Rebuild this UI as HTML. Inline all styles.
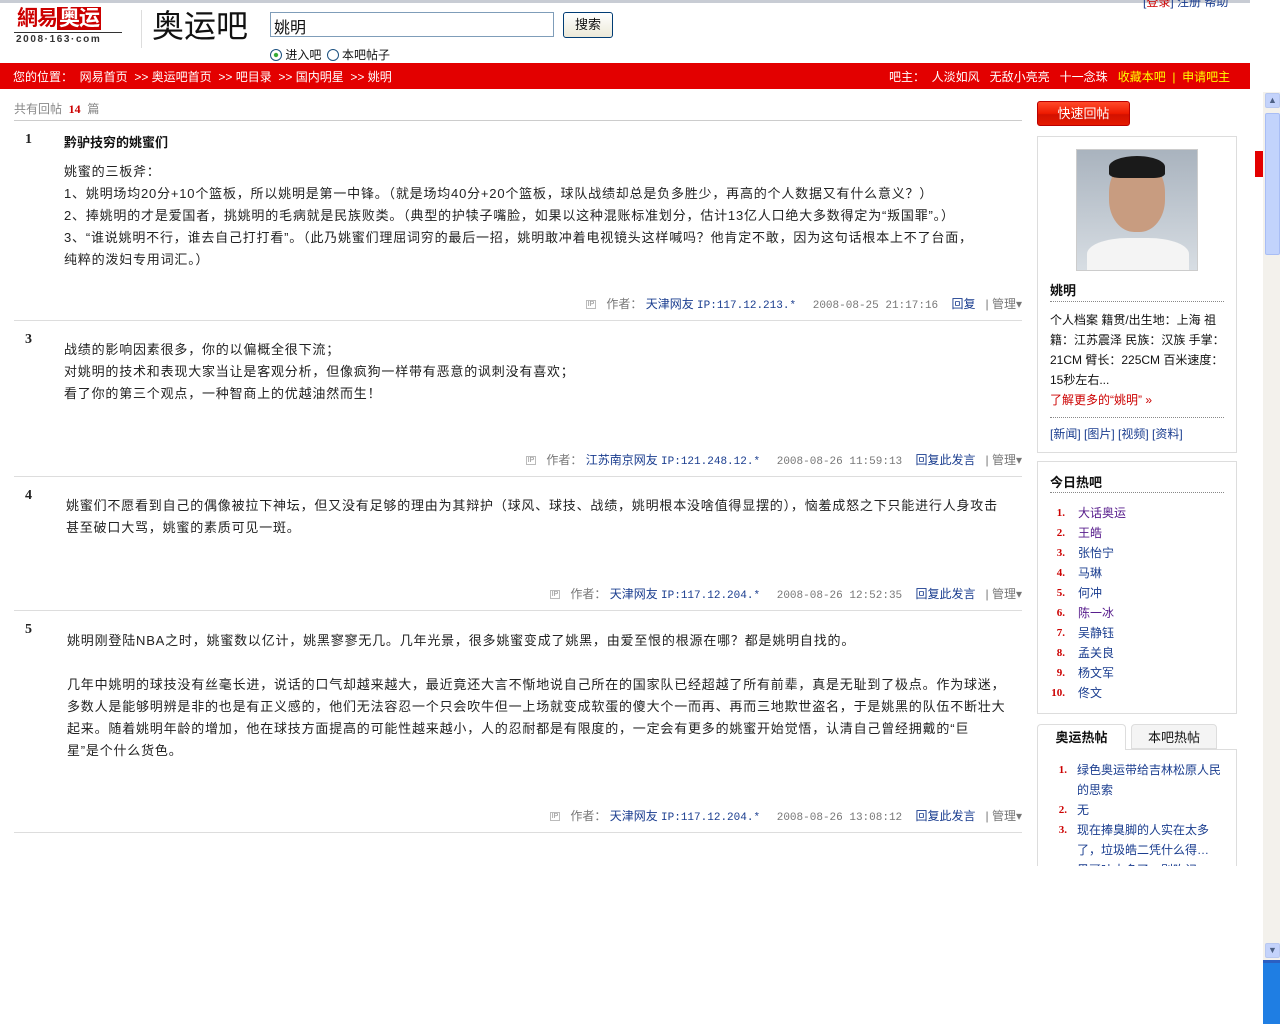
<!DOCTYPE html>
<html><head><meta charset="utf-8"><style>
*{margin:0;padding:0;box-sizing:border-box}
body{width:1280px;height:1024px;position:relative;overflow:hidden;background:#fff;font-family:"Liberation Sans","Noto Sans CJK SC","WenQuanYi Zen Hei",sans-serif;font-size:12px;color:#333}
.a{position:absolute;white-space:nowrap}
a{text-decoration:none}
.nav{color:#fff}
.post{position:absolute;left:14px;width:1008px;border-bottom:1px solid #ddd}
.num{position:absolute;left:11px;font-size:14px;font-weight:bold;color:#222;font-family:"Liberation Serif",serif}
.body{position:absolute;left:50px;font-size:13px;line-height:22px;color:#222;white-space:nowrap;letter-spacing:0.8px}
.foot{position:absolute;right:0;font-size:12px;color:#777;white-space:nowrap}
.foot .u{color:#1a3d8f}
.foot .m{font-family:"Liberation Mono",monospace;font-size:11px}
.foot .ip{display:inline-block;border:1px solid #bbb;font-size:7px;line-height:7px;padding:0 1px;color:#888;vertical-align:middle;margin-right:10px}
.box{position:absolute;left:1037px;width:200px;border:1px solid #ddd;background:#fff}
.hot{font-size:12px;line-height:20px}
.hot div{position:relative;padding-left:40px;color:#1a3d8f}
.hot b{position:absolute;left:0;width:27px;text-align:right;color:#c00;font-size:11px;font-family:"Liberation Serif",serif}
</style></head><body>
<div class="a" style="left:0;top:0;width:1250px;height:3px;background:#c8ccd4"></div>
<div class="a" style="left:1143px;top:-7px;font-size:12px;color:#1a3d8f">[<span style="color:#c00">登录</span>] 注册 帮助</div>
<!-- logo -->
<div class="a" style="left:17px;top:6px;font-size:21px;line-height:26px;color:#c00;font-weight:bold;letter-spacing:-1px">網易<span style="background:#c00;color:#fff;padding:0 2px">奥运</span></div>
<div class="a" style="left:14px;top:32px;width:108px;height:1px;background:#333"></div>
<div class="a" style="left:16px;top:34px;font-size:10px;line-height:12px;font-weight:bold;color:#333;letter-spacing:1.6px">2008·163·com</div>
<div class="a" style="left:141px;top:10px;width:1px;height:38px;background:#ddd"></div>
<div class="a" style="left:152px;top:6px;font-size:32px;line-height:40px;color:#111">奥运吧</div>
<div class="a" style="left:270px;top:12px;width:284px;height:25px;border:1px solid #7f9db9;font-size:16px;padding:1px 3px;color:#111">姚明</div>
<div class="a" style="left:563px;top:12px;width:50px;height:26px;border:1px solid #003c74;border-radius:3px;background:linear-gradient(#fff,#ece9d8);font-size:13px;text-align:center;line-height:24px;color:#111">搜索</div>
<div class="a" style="left:270px;top:46px;font-size:12px;color:#111"><span style="display:inline-block;width:12px;height:12px;border:1px solid #1c5180;border-radius:50%;vertical-align:-2px;background:radial-gradient(#3a3 25%,#fff 35%)"></span> 进入吧 <span style="display:inline-block;width:12px;height:12px;border:1px solid #1c5180;border-radius:50%;vertical-align:-2px;margin-left:2px"></span> 本吧帖子</div>
<!-- nav -->
<div class="a" style="left:0;top:63px;width:1250px;height:26px;background:#e30000"></div>
<div class="a nav" style="left:13px;top:68px">您的位置： &nbsp;网易首页 &nbsp;&gt;&gt; 奥运吧首页 &nbsp;&gt;&gt; 吧目录 &nbsp;&gt;&gt; 国内明星 &nbsp;&gt;&gt; 姚明</div>
<div class="a nav" style="left:889px;top:68px">吧主： &nbsp;人淡如风 &nbsp;&nbsp;无敌小亮亮 &nbsp;&nbsp;十一念珠 &nbsp;&nbsp;<span style="color:#ff0">收藏本吧 &nbsp;| &nbsp;申请吧主</span></div>
<div class="a" style="left:14px;top:100px;color:#888">共有回帖 &nbsp;<b style="color:#c00;font-family:'Liberation Serif',serif">14</b> &nbsp;篇</div>
<div class="a" style="left:14px;top:120px;width:1008px;height:1px;background:#ccc"></div>

<div class="post" style="top:121px;height:200px">
<div class="num" style="top:11px">1</div>
<div class="a" style="left:50px;top:11px;font-size:13px;font-weight:bold;color:#111">黔驴技穷的姚蜜们</div>
<div class="body" style="top:40px">姚蜜的三板斧：<br>1、姚明场均20分+10个篮板，所以姚明是第一中锋。（就是场均40分+20个篮板，球队战绩却总是负多胜少，再高的个人数据又有什么意义？）<br>2、捧姚明的才是爱国者，挑姚明的毛病就是民族败类。（典型的护犊子嘴脸，如果以这种混账标准划分，估计13亿人口绝大多数得定为“叛国罪”。）<br>3、“谁说姚明不行，谁去自己打打看”。（此乃姚蜜们理屈词穷的最后一招，姚明敢冲着电视镜头这样喊吗？他肯定不敢，因为这句话根本上不了台面，<br>纯粹的泼妇专用词汇。）</div>
<div class="foot" style="top:174px"><span class="ip">IP</span>作者： <span class="u">天津网友 <span class="m">IP:117.12.213.*</span></span> &nbsp;&nbsp;&nbsp;&nbsp;<span class="m">2008-08-25 21:17:16</span> &nbsp;&nbsp;&nbsp;<span class="u">回复</span> &nbsp;&nbsp;| 管理▾</div>
</div>

<div class="post" style="top:321px;height:156px">
<div class="num" style="top:11px">3</div>
<div class="body" style="top:18px">战绩的影响因素很多，你的以偏概全很下流；<br>对姚明的技术和表现大家当让是客观分析，但像疯狗一样带有恶意的讽刺没有喜欢；<br>看了你的第三个观点，一种智商上的优越油然而生！</div>
<div class="foot" style="top:130px"><span class="ip">IP</span>作者： <span class="u">江苏南京网友 <span class="m">IP:121.248.12.*</span></span> &nbsp;&nbsp;&nbsp;&nbsp;<span class="m">2008-08-26 11:59:13</span> &nbsp;&nbsp;&nbsp;<span class="u">回复此发言</span> &nbsp;&nbsp;| 管理▾</div>
</div>

<div class="post" style="top:477px;height:134px">
<div class="num" style="top:11px">4</div>
<div class="body" style="top:18px;left:52px">姚蜜们不愿看到自己的偶像被拉下神坛，但又没有足够的理由为其辩护（球风、球技、战绩，姚明根本没啥值得显摆的），恼羞成怒之下只能进行人身攻击<br>甚至破口大骂，姚蜜的素质可见一斑。</div>
<div class="foot" style="top:108px"><span class="ip">IP</span>作者： <span class="u">天津网友 <span class="m">IP:117.12.204.*</span></span> &nbsp;&nbsp;&nbsp;&nbsp;<span class="m">2008-08-26 12:52:35</span> &nbsp;&nbsp;&nbsp;<span class="u">回复此发言</span> &nbsp;&nbsp;| 管理▾</div>
</div>

<div class="post" style="top:611px;height:222px">
<div class="num" style="top:11px">5</div>
<div class="body" style="top:19px;left:53px">姚明刚登陆NBA之时，姚蜜数以亿计，姚黑寥寥无几。几年光景，很多姚蜜变成了姚黑，由爱至恨的根源在哪？都是姚明自找的。<br><br>几年中姚明的球技没有丝毫长进，说话的口气却越来越大，最近竟还大言不惭地说自己所在的国家队已经超越了所有前辈，真是无耻到了极点。作为球迷，<br>多数人是能够明辨是非的也是有正义感的，他们无法容忍一个只会吹牛但一上场就变成软蛋的傻大个一而再、再而三地欺世盗名，于是姚黑的队伍不断壮大<br>起来。随着姚明年龄的增加，他在球技方面提高的可能性越来越小，人的忍耐都是有限度的，一定会有更多的姚蜜开始觉悟，认清自己曾经拥戴的“巨<br>星”是个什么货色。</div>
<div class="foot" style="top:196px"><span class="ip">IP</span>作者： <span class="u">天津网友 <span class="m">IP:117.12.204.*</span></span> &nbsp;&nbsp;&nbsp;&nbsp;<span class="m">2008-08-26 13:08:12</span> &nbsp;&nbsp;&nbsp;<span class="u">回复此发言</span> &nbsp;&nbsp;| 管理▾</div>
</div>

<!-- right column -->
<div class="a" style="left:1037px;top:101px;width:93px;height:25px;border:1px solid #b00;border-radius:3px;background:linear-gradient(#ff4a2a 0%,#ee1a00 50%,#d31100 55%,#e41a00 100%);color:#fff;font-size:13px;text-align:center;line-height:23px">快速回帖</div>
<div class="box" style="top:136px;height:317px">
<div class="a" style="left:38px;top:12px;width:122px;height:122px;border:1px solid #ccc;background:linear-gradient(#a9b3be,#d7dde3);overflow:hidden">
<div style="position:absolute;left:32px;top:10px;width:56px;height:72px;border-radius:45%;background:#c89c80"></div>
<div style="position:absolute;left:32px;top:6px;width:56px;height:22px;border-radius:50% 50% 20% 20%;background:#1a1a1a"></div>
<div style="position:absolute;left:10px;top:88px;width:102px;height:40px;border-radius:40% 40% 0 0;background:#f4f4f4"></div>
</div>
<div class="a" style="left:12px;top:143px;font-size:13px;font-weight:bold;color:#111">姚明</div>
<div class="a" style="left:12px;top:164px;width:174px;border-top:1px dotted #888"></div>
<div class="a" style="left:12px;top:173px;width:176px;white-space:normal;line-height:20px;color:#111">个人档案 籍贯/出生地：上海 祖籍：江苏震泽 民族：汉族 手掌：21CM 臂长：225CM 百米速度：15秒左右...<br><span style="color:#c00">了解更多的“姚明” »</span></div>
<div class="a" style="left:12px;top:280px;width:174px;border-top:1px dotted #888"></div>
<div class="a" style="left:12px;top:288px;color:#1a3d8f">[新闻] [图片] [视频] [资料]</div>
</div>
<div class="box" style="top:461px;height:253px">
<div class="a" style="left:12px;top:10px;font-size:13px;font-weight:bold;color:#111">今日热吧</div>
<div class="a" style="left:12px;top:30px;width:174px;border-top:1px dotted #888"></div>
<div class="a hot" style="left:0;top:41px;width:190px">
<div style="color:#551a8b"><b>1.</b>大话奥运</div><div style="color:#551a8b"><b>2.</b>王皓</div><div><b>3.</b>张怡宁</div><div><b>4.</b>马琳</div><div><b>5.</b>何冲</div><div style="color:#551a8b"><b>6.</b>陈一冰</div><div><b>7.</b>吴静钰</div><div><b>8.</b>孟关良</div><div><b>9.</b>杨文军</div><div><b>10.</b>佟文</div>
</div></div>
<div class="a" style="left:1037px;top:724px;width:200px;height:142px;overflow:hidden">
<div class="a" style="left:0;top:25px;width:200px;height:130px;border:1px solid #ddd;border-bottom:none"></div>
<div class="a" style="left:0;top:0;width:89px;height:26px;border:1px solid #ddd;border-bottom:none;border-radius:4px 4px 0 0;background:#fff;font-size:13px;font-weight:bold;color:#111;text-align:center;line-height:25px">奥运热帖</div>
<div class="a" style="left:94px;top:0;width:86px;height:25px;border:1px solid #ddd;border-radius:4px 4px 0 0;background:#f4f4f4;font-size:13px;color:#111;text-align:center;line-height:25px">本吧热帖</div>
<div class="a hot" style="left:0;top:36px;width:190px;white-space:normal">
<div><b style="width:30px">1.</b><span style="display:block;width:150px">绿色奥运带给吉林松原人民的思索</span></div>
<div><b style="width:30px">2.</b>无</div>
<div><b style="width:30px">3.</b><span style="display:block;width:150px">现在捧臭脚的人实在太多了，垃圾皓二凭什么得…</span></div>
<div><b style="width:30px">4.</b>黑哥吐大多了，别吹记</div>
</div></div>

<!-- scrollbar -->
<div class="a" style="left:1250px;top:0;width:30px;height:92px;background:#fff"></div>
<div class="a" style="left:1255px;top:151px;width:8px;height:26px;background:#e30000"></div>
<div class="a" style="left:1263px;top:92px;width:17px;height:870px;background:#f3f1ec"></div>
<div class="a" style="left:1265px;top:93px;width:15px;height:15px;border:1px solid #b8c8f0;border-radius:2px;background:#c4d3fb;color:#4d6185;font-size:9px;text-align:center;line-height:13px">▲</div>
<div class="a" style="left:1265px;top:113px;width:15px;height:142px;border:1px solid #a8bdf5;border-radius:2px;background:#c2d3fc"></div>
<div class="a" style="left:1265px;top:943px;width:15px;height:15px;border:1px solid #b8c8f0;border-radius:2px;background:#c4d3fb;color:#4d6185;font-size:9px;text-align:center;line-height:13px">▼</div>
<div class="a" style="left:1263px;top:960px;width:17px;height:64px;background:#1f7ee3;border-top:3px solid #2b5fc2"></div>
</body></html>
